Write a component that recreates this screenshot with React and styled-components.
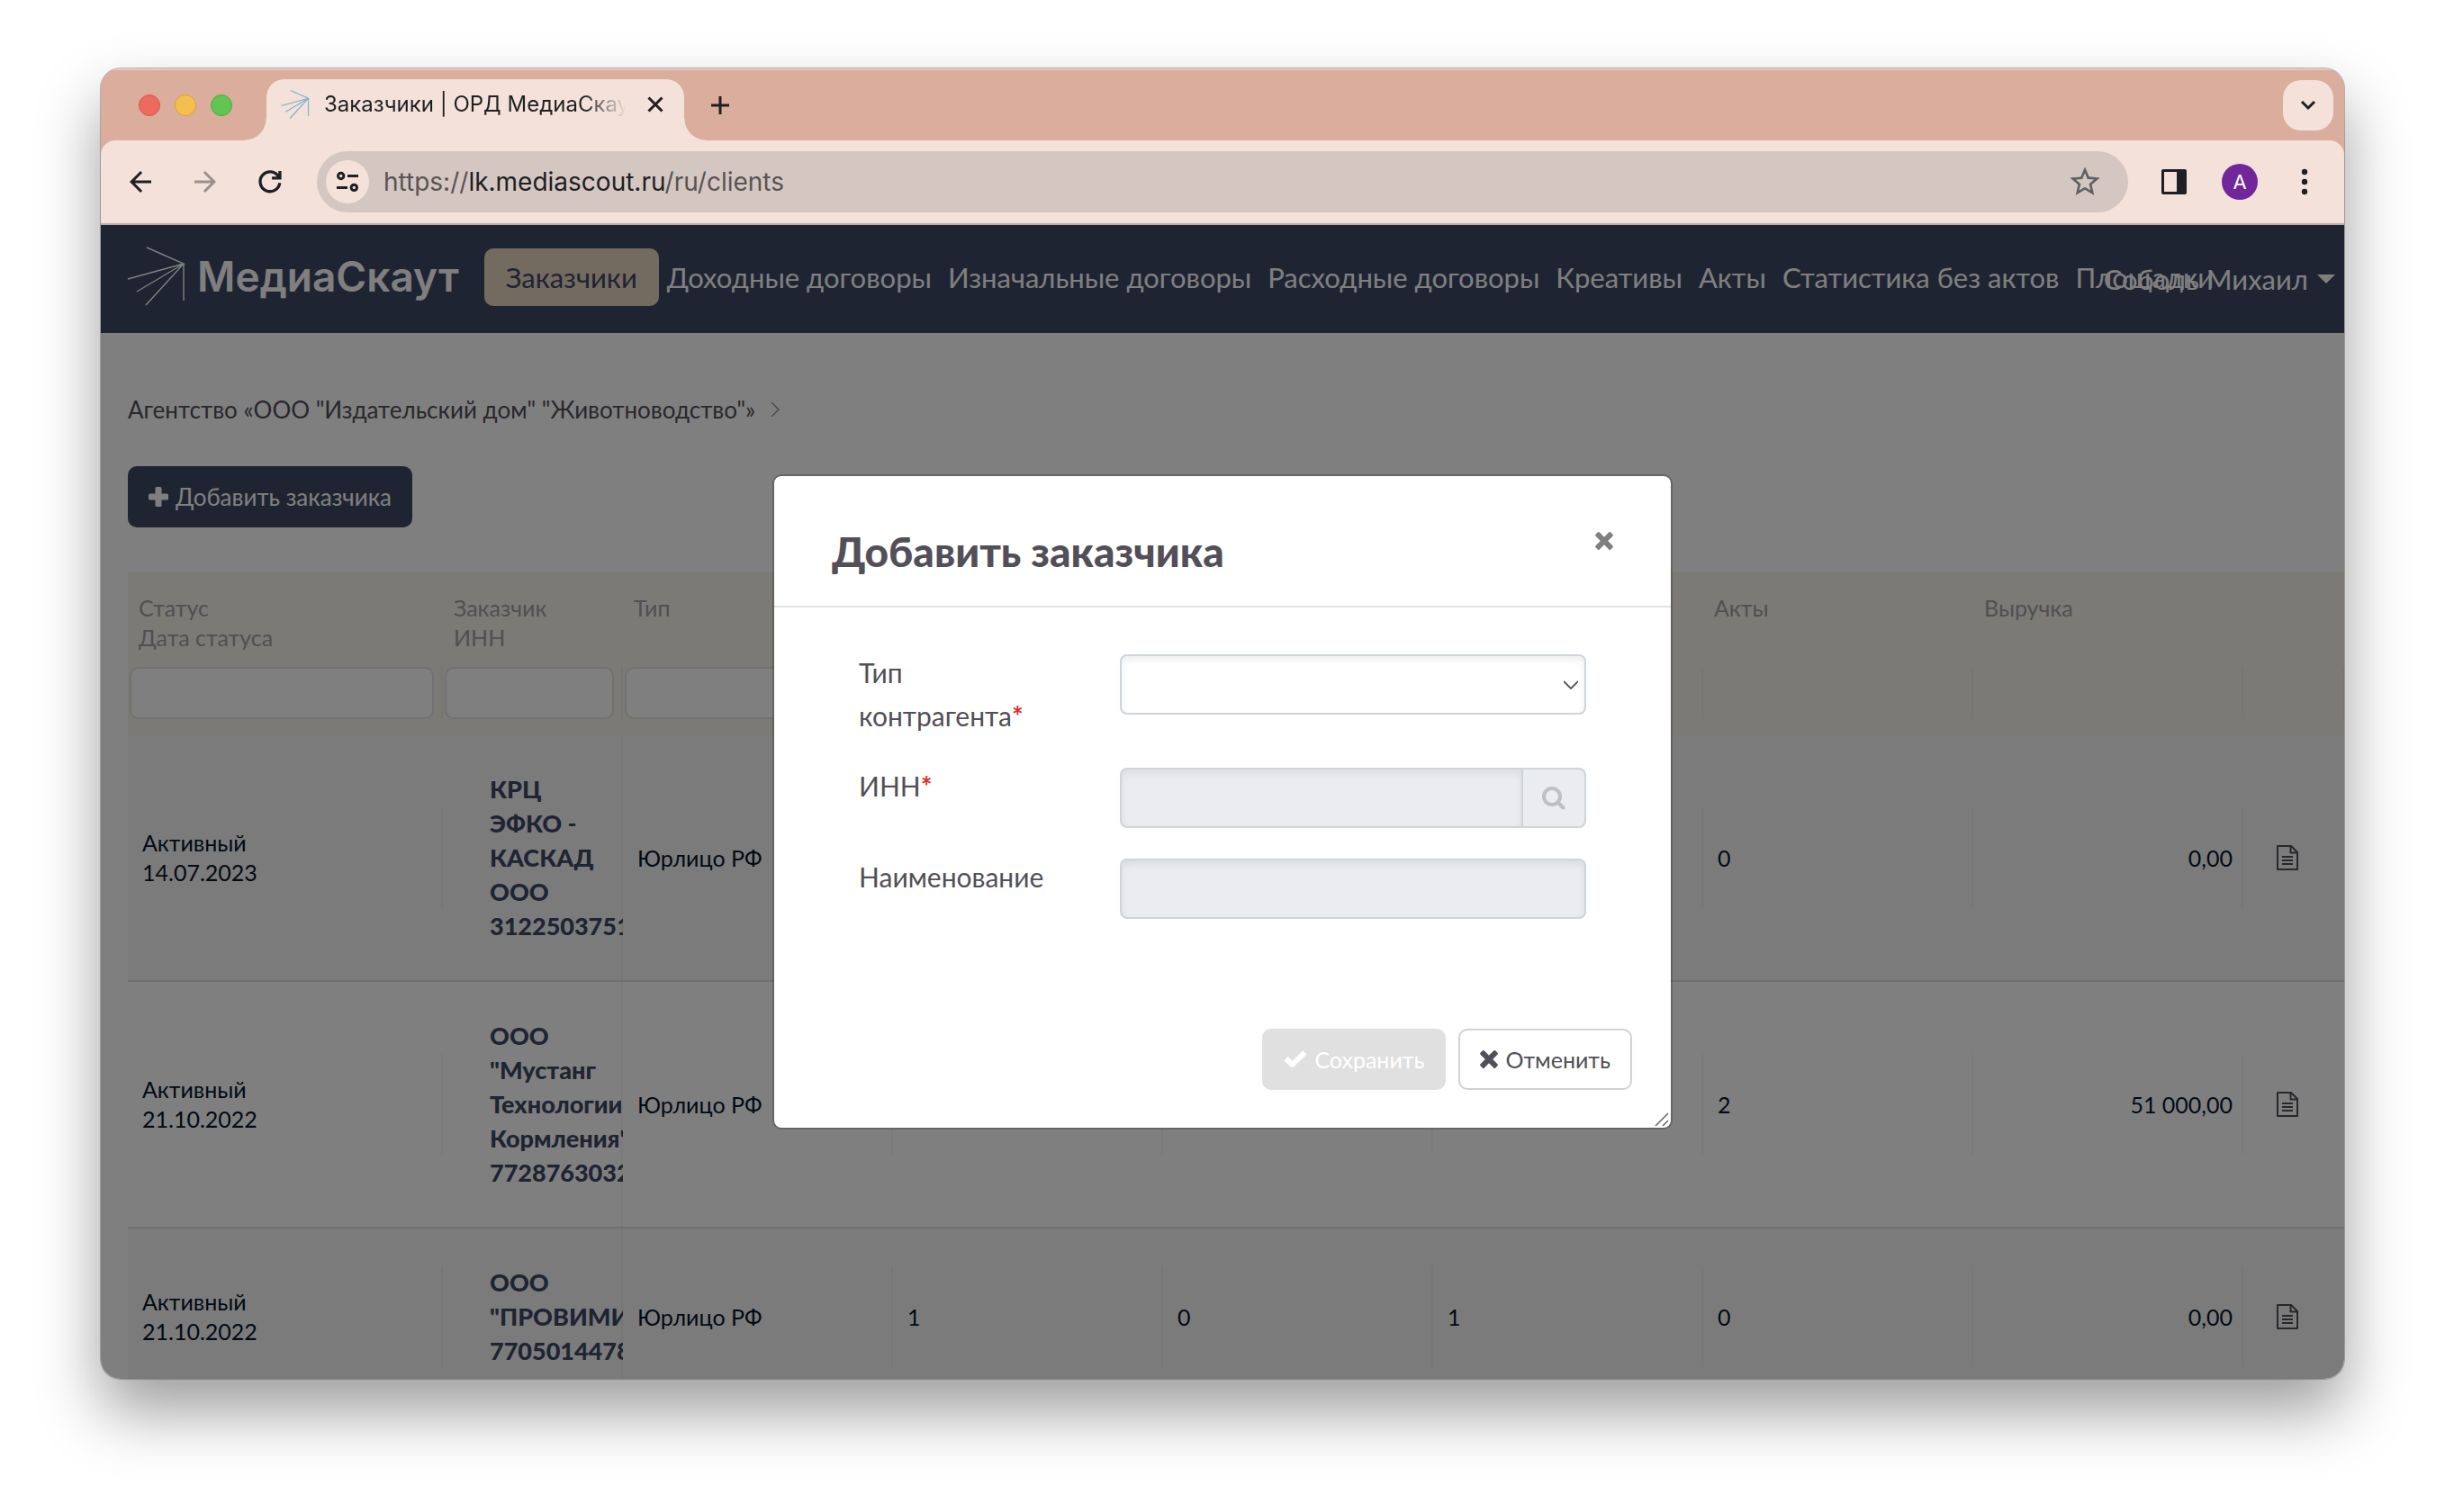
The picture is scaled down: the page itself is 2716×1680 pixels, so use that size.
import React from "react";
import styled, { createGlobalStyle, css } from "styled-components";

const ui = `Inter, "Liberation Sans", sans-serif`;
const text = `Lato, "Noto Sans", sans-serif`;
const navy = "#3e4866";
const ink = "#524f59";

const GlobalStyle = createGlobalStyle`
  *, *::before, *::after { box-sizing: border-box; }
  body { margin: 0; background: #fff; }
  button, input, select { font: inherit; color: inherit; margin: 0; }
  button { border: 0; background: none; padding: 0; cursor: pointer; }
  a { color: inherit; text-decoration: none; }
  svg { display: block; flex: none; }
`;

/* ---------- browser window ---------- */

const Desktop = styled.div`
  height: 100vh;
  padding: 76px 112px 148px;
  display: flex;
`;

const Window = styled.div`
  flex: 1;
  min-width: 0;
  display: flex;
  flex-direction: column;
  overflow: hidden;
  border-radius: 22px;
  background: #dbad9c;
  font-family: ${ui};
  color: #1f2023;
  box-shadow: 0 0 0 1px rgba(0, 0, 0, 0.25), 0 36px 70px rgba(0, 0, 0, 0.39);
`;

const TabStrip = styled.div`
  height: 80px;
  display: flex;
  align-items: center;
  padding: 0 12px 0 42px;
  border-top: 2px solid #e6cabf;
`;

const Lights = styled.div`
  display: flex;
  gap: 16px;
  margin-right: 38px;
`;

const Light = styled.button`
  width: 24px;
  height: 24px;
  border-radius: 50%;
  background: ${(p) => p.$fill};
  border: 1px solid ${(p) => p.$edge};
`;

const Tab = styled.div`
  position: relative;
  align-self: flex-end;
  width: 464px;
  height: 68px;
  padding: 0 22px 12px 16px;
  display: flex;
  align-items: center;
  gap: 16px;
  border-radius: 20px 20px 0 0;
  background: #f3e1da;

  &::before,
  &::after {
    content: "";
    position: absolute;
    bottom: 0;
    width: 24px;
    height: 24px;
  }
  &::before {
    right: 100%;
    background: radial-gradient(circle at 0 0, transparent 23px, #f3e1da 24px);
  }
  &::after {
    left: 100%;
    background: radial-gradient(circle at 100% 0, transparent 23px, #f3e1da 24px);
  }
`;

const TabTitle = styled.span`
  flex: 1;
  min-width: 0;
  overflow: hidden;
  white-space: nowrap;
  font-size: 24px;
  line-height: 32px;
  mask-image: linear-gradient(to right, #000 84%, transparent 98%);
`;

const NewTab = styled.button`
  margin: 0 auto 0 30px;
`;

const TabSearch = styled.button`
  width: 56px;
  height: 56px;
  display: grid;
  place-items: center;
  border-radius: 20px;
  background: #f3e1da;
`;

const Toolbar = styled.div`
  height: 94px;
  display: flex;
  align-items: center;
  padding: 0 26px;
  border-radius: 16px 16px 0 0;
  background: #f3e1da;
  border-bottom: 2px solid #b9b0ae;
`;

const ToolGroup = styled.div`
  display: flex;
  align-items: center;
  gap: ${(p) => p.$gap || 36}px;
`;

const ToolButton = styled.button`
  color: ${(p) => (p.$muted ? "#9b908d" : "#1f2023")};
`;

const KebabBox = styled.span`
  display: block;
  padding: 0 14px 0 10px;
`;

const AddressBar = styled.div`
  flex: 1;
  min-width: 0;
  height: 68px;
  margin: 0 36px 0 34px;
  padding: 0 28px 0 10px;
  display: flex;
  align-items: center;
  gap: 16px;
  border-radius: 34px;
  background: #d4c7c2;
`;

const SiteInfo = styled.button`
  width: 48px;
  height: 48px;
  display: grid;
  place-items: center;
  border-radius: 50%;
  background: #f3e1da;
`;

const Url = styled.span`
  flex: 1;
  font-size: 28px;
  line-height: 36px;
  color: #5a5352;
`;

const Host = styled.span`
  color: #1f2023;
`;

const StarButton = styled.button`
  color: #5f6163;
`;

const Avatar = styled.button`
  width: 40px;
  height: 40px;
  border-radius: 50%;
  background: #71269a;
  color: #fff;
  font-size: 22px;
  line-height: 40px;
`;

/* ---------- web page ---------- */

const Viewport = styled.div`
  position: relative;
  flex: 1;
  min-height: 0;
  overflow: hidden;
  background: #fff;
  font-family: ${text};
`;

const Navbar = styled.header`
  height: 120px;
  display: flex;
  align-items: center;
  padding: 0 10px 0 29px;
  background: ${navy};
  color: #fff;
  white-space: nowrap;
`;

const Brand = styled.a`
  display: flex;
  align-items: center;
  gap: 12px;
  margin: 0 28px 6px 0;
  font: 600 46px/56px ${ui};
`;

const Nav = styled.nav`
  flex: 1;
  min-width: 0;
  display: flex;
  align-items: center;
  margin-bottom: 4px;
  font-size: 31px;
  line-height: 40px;
`;

const NavLink = styled.a`
  padding: 12px 9px;
  ${(p) =>
    p.$active &&
    css`
      padding: 12px 24px;
      border-radius: 10px;
      background: #e6d6be;
      color: ${navy};
    `}
`;

const UserMenu = styled.button`
  display: flex;
  align-items: center;
  gap: 10px;
  color: #fff;
  font-size: 31px;
  line-height: 40px;
`;

const Caret = styled.span`
  border: 10px solid transparent;
  border-top-color: #fff;
  border-bottom: 0;
`;

const Content = styled.main`
  padding: 69px 0 0 30px;
`;

const Breadcrumb = styled.nav`
  display: flex;
  align-items: center;
  gap: 14px;
  font-size: 26px;
  line-height: 32px;
  color: ${ink};
`;

const Button = styled.button`
  height: 68px;
  padding: 0 23px;
  display: inline-flex;
  align-items: center;
  gap: 8px;
  border-radius: 10px;
  font-family: ${text};
  font-size: 25px;
  line-height: 32px;
  white-space: nowrap;
  ${(p) =>
    p.$kind === "primary" &&
    css`
      font-size: 26px;
      background: ${navy};
      color: #fff;
    `}
  ${(p) =>
    p.$kind === "muted" &&
    css`
      padding: 0 24px;
      background: #e0e0e0;
      color: #fff;
    `}
  ${(p) =>
    p.$kind === "outline" &&
    css`
      padding: 0 22px;
      background: #fff;
      color: ${ink};
      border: 2px solid #d2d2d3;
    `}
`;

const AddBar = styled.div`
  padding: 47px 0 49px;
  display: flex;
`;

const Table = styled.table`
  width: 100%;
  table-layout: fixed;
  border-collapse: separate;
  border-spacing: 0;
  font-size: 25px;
  line-height: 33px;
  color: #04152a;
`;

const Col = styled.col`
  width: ${(p) => (p.$width ? `${p.$width}px` : "auto")};
`;

const HeadRow = styled.tr`
  background: #f8f4ea;
`;

const HeadCell = styled.th`
  padding: 24px 12px 16px;
  text-align: left;
  vertical-align: top;
  font-weight: 400;
  color: #a29fa4;
  white-space: pre-line;
`;

const rule = css`
  background-image: linear-gradient(rgba(0, 0, 0, 0.03), rgba(0, 0, 0, 0.03));
  background-position: right center;
  background-repeat: no-repeat;
`;

const FilterCell = styled.td`
  height: 76px;
  padding: 0 10px 0 2px;
  vertical-align: top;
  ${rule}
  background-position: right top;
  background-size: 2px 58px;
`;

const FilterInput = styled.input`
  display: block;
  width: 100%;
  height: 58px;
  padding: 0 12px;
  border: 2px solid #e2e2e4;
  border-radius: 10px;
  background: #fff;
`;

const BodyRow = styled.tr`
  &:nth-child(odd) {
    background: #f6f6f6;
  }
`;

const Cell = styled.td`
  padding: 41px 12px 41px 16px;
  border-bottom: 2px solid #dedede;
  text-align: ${(p) => (p.$end ? "right" : "left")};
  white-space: pre-line;
  ${rule}
  background-size: 2px 112px;
`;

const ClientCell = styled(Cell)`
  padding: 41px 0 41px 52px;
  overflow: hidden;
  white-space: pre;
  font-size: 27px;
  font-weight: 900;
  line-height: 38px;
  color: ${navy};
  background-size: 2px 100%;
`;

const ActionCell = styled(Cell)`
  padding-left: 37px;
  color: ${ink};
  background-image: none;
  & > button {
    display: block;
  }
`;

/* ---------- dialog ---------- */

const Backdrop = styled.div`
  position: absolute;
  inset: 0;
  display: flex;
  align-items: center;
  justify-content: center;
  background: rgba(0, 0, 0, 0.5);
`;

const Dialog = styled.section`
  position: relative;
  width: 1000px;
  max-width: 90%;
  border: 2px solid rgba(0, 0, 0, 0.2);
  border-radius: 10px;
  background: #fff;
  background-clip: padding-box;
  color: ${ink};
`;

const DialogHeader = styled.header`
  display: flex;
  align-items: flex-start;
  justify-content: space-between;
  padding: 56px 64px 32px;
  border-bottom: 2px solid #dee2e6;
`;

const DialogTitle = styled.h2`
  margin: 0;
  font-size: 46px;
  font-weight: 900;
  line-height: 56px;
`;

const CloseButton = styled.button`
  padding-top: 6px;
  color: #7f7f7f;
`;

const Form = styled.form`
  display: grid;
  row-gap: 34px;
  padding: 52px 94px 122px;
  font-size: 30px;
`;

const Field = styled.div`
  display: grid;
  grid-template-columns: 290px 1fr;
  align-items: start;
`;

const Label = styled.label`
  margin-top: -4px;
  padding-right: 72px;
  line-height: 48px;
`;

const Required = styled.span`
  font-weight: 700;
  color: #d9302b;
`;

const control = css`
  width: 100%;
  height: 67px;
  padding: 0 24px;
  border: 2px solid #ced4da;
  border-radius: 8px;
  background: ${(p) => (p.disabled ? "#ebecef" : "#fff")};
  box-shadow: inset 0 4px 8px rgba(0, 0, 0, 0.07);
`;

const TextInput = styled.input`
  ${control}
`;

const SelectBox = styled.div`
  display: grid;
  align-items: center;
  & > * {
    grid-area: 1 / 1;
  }
  & > svg {
    justify-self: end;
    margin-right: 9px;
    pointer-events: none;
  }
`;

const Select = styled.select`
  ${control}
  appearance: none;
`;

const SearchGroup = styled.div`
  display: flex;
  & > input {
    flex: 1;
    min-width: 0;
    border-radius: 8px 0 0 8px;
    border-right: 0;
  }
`;

const SearchButton = styled.button`
  width: 72px;
  height: 67px;
  display: grid;
  place-items: center;
  border: 2px solid #ced4da;
  border-radius: 0 8px 8px 0;
  background: #ebecef;
  color: #bfbfc0;
`;

const DialogFooter = styled.footer`
  display: flex;
  justify-content: flex-end;
  gap: 14px;
  padding: 0 43px 42px;
`;

const ResizeGrip = styled.svg`
  position: absolute;
  right: 2px;
  bottom: 1px;
`;

/* ---------- drawings ---------- */

const Rays = ({ size, color, stroke }) => (
  <svg width={size} height={size} viewBox="0 0 66 66" fill="none" stroke={color} strokeWidth={stroke}>
    <path d="M22 1 63 19 1 36M63 19 11 50M63 19 21 65M63 19V60" />
  </svg>
);

const Material = ({ d, size = 36 }) => (
  <svg width={size} height={size} viewBox="0 0 24 24" fill="currentColor">
    <path d={d} />
  </svg>
);

const Stroke = ({ size, d, width, box = size, color = "currentColor" }) => (
  <svg width={size} height={size} viewBox={`0 0 ${box} ${box}`} fill="none" stroke={color} strokeWidth={width}>
    <path d={d} />
  </svg>
);

const Plus = () => (
  <svg width="22" height="22" viewBox="0 0 22 22" fill="currentColor">
    <rect x="7.5" width="7" height="22" rx="1.5" />
    <rect y="7.5" width="22" height="7" rx="1.5" />
  </svg>
);

const Cross = ({ size = 20 }) => (
  <svg width={size} height={size} viewBox="0 0 20 20" fill="currentColor">
    <g transform="rotate(45 10 10)">
      <rect x="7" y="-1.8" width="6" height="23.6" rx="1.5" />
      <rect x="-1.8" y="7" width="23.6" height="6" rx="1.5" />
    </g>
  </svg>
);

const Check = () => (
  <svg width="26" height="20" viewBox="0 0 26 20" fill="none" stroke="currentColor" strokeWidth="6" strokeLinejoin="round">
    <path d="M2.5 9 9.5 15.8 23.5 2.5" />
  </svg>
);

const Magnifier = () => (
  <svg width="26" height="26" viewBox="0 0 26 26" fill="none" stroke="currentColor" strokeWidth="4">
    <circle cx="11" cy="11" r="9" />
    <path d="m17.5 17.5 6 6" strokeLinecap="round" />
  </svg>
);

const Tune = () => (
  <svg width="24" height="24" viewBox="0 0 24 24" fill="none" stroke="currentColor" strokeWidth="3">
    <circle cx="4.7" cy="5.5" r="3.2" />
    <path d="M12 5.5h12M0 18.4h12" />
    <circle cx="19.3" cy="18.4" r="3.2" />
  </svg>
);

const SidePanel = () => (
  <svg width="30" height="30" viewBox="0 0 30 30" fill="#1f2023">
    <path fillRule="evenodd" d="M3 1h24a2 2 0 0 1 2 2v24a2 2 0 0 1-2 2H3a2 2 0 0 1-2-2V3a2 2 0 0 1 2-2zM4 4v22h14V4z" />
  </svg>
);

const Kebab = () => (
  <svg width="8" height="30" viewBox="0 0 8 30" fill="#1f2023">
    <circle cx="4" cy="4" r="3.2" />
    <circle cx="4" cy="15" r="3.2" />
    <circle cx="4" cy="26" r="3.2" />
  </svg>
);

const Document = () => (
  <svg width="24" height="28" viewBox="0 0 24 28" fill="none" stroke="currentColor" strokeWidth="2" strokeLinejoin="round">
    <path d="M1 1h15l7 7v19H1zM15.500 1v7.500H23M6 13h12M6 17h12M6 21h12" />
  </svg>
);

const BACK = "M20 11H7.83l5.59-5.59L12 4l-8 8 8 8 1.41-1.41L7.83 13H20v-2z";
const FORWARD = "M12 4l-1.410 1.410L16.170 11H4v2h12.170l-5.580 5.590L12 20l8-8z";
const STAR =
  "M22 9.240l-7.190-.62L12 2 9.190 8.630 2 9.240l5.460 4.730L5.820 21 12 17.270 18.180 21l-1.630-7.030L22 9.240zM12 15.400l-3.760 2.270 1-4.280-3.320-2.880 4.380-.38L12 6.100l1.710 4.040 4.380.38-3.320 2.880 1 4.280L12 15.400z";

/* ---------- data ---------- */

const links = [
  "Заказчики",
  "Доходные договоры",
  "Изначальные договоры",
  "Расходные договоры",
  "Креативы",
  "Акты",
  "Статистика без актов",
  "Площадки",
];

const columns = [
  { width: 350, title: "Статус\nДата статуса", filter: true },
  { width: 200, title: "Заказчик\nИНН", filter: true },
  { width: 300, title: "Тип", filter: true },
  { width: 300, title: "" },
  { width: 300, title: "" },
  { width: 300, title: "" },
  { width: 300, title: "Акты" },
  { width: 300, title: "Выручка" },
  { title: "" },
];

const rows = [
  {
    date: "14.07.2023",
    client: "КРЦ\nЭФКО -\nКАСКАД\nООО\n3122503751",
    counts: ["", "", "", "0"],
    revenue: "0,00",
  },
  {
    date: "21.10.2022",
    client: 'ООО\n"Мустанг\nТехнологии\nКормления"\n7728763032',
    counts: ["", "", "", "2"],
    revenue: "51 000,00",
  },
  {
    date: "21.10.2022",
    client: 'ООО\n"ПРОВИМИ"\n7705014478',
    counts: ["1", "0", "1", "0"],
    revenue: "0,00",
  },
];

function BrowserChrome() {
  return (
    <>
      <TabStrip>
        <Lights>
          <Light aria-label="Закрыть окно" $fill="#ed6a5e" $edge="#d5574c" />
          <Light aria-label="Свернуть" $fill="#f4bf4f" $edge="#d9a23c" />
          <Light aria-label="Развернуть" $fill="#61c554" $edge="#4fa73f" />
        </Lights>
        <Tab>
          <Rays size={32} color="#7fb3c8" stroke={2.4} />
          <TabTitle>Заказчики | ОРД МедиаСкаут</TabTitle>
          <button aria-label="Закрыть вкладку">
            <Stroke size={20} d="M2.500 2.500l15 15M17.500 2.500l-15 15" width={3} />
          </button>
        </Tab>
        <NewTab aria-label="Новая вкладка">
          <Stroke size={20} d="M10 0v20M0 10h20" width={3} />
        </NewTab>
        <TabSearch aria-label="Поиск вкладок">
          <Stroke size={18} d="M2 5l7 7 7-7" width={3} />
        </TabSearch>
      </TabStrip>
      <Toolbar>
        <ToolGroup>
          <ToolButton aria-label="Назад">
            <Material d={BACK} />
          </ToolButton>
          <ToolButton aria-label="Вперёд" $muted>
            <Material d={FORWARD} />
          </ToolButton>
          <ToolButton aria-label="Обновить">
            <Stroke size={36} box={24} width={2.2} d="M19.200 12.800A7.300 7.300 0 1 1 18.300 8.200M19.300 4v5.300H13.400" />
          </ToolButton>
        </ToolGroup>
        <AddressBar>
          <SiteInfo aria-label="Сведения о сайте">
            <Tune />
          </SiteInfo>
          <Url>
            https://<Host>lk.mediascout.ru</Host>/ru/clients
          </Url>
          <StarButton aria-label="В закладки">
            <Material d={STAR} size={40} />
          </StarButton>
        </AddressBar>
        <ToolGroup $gap={38}>
          <ToolButton aria-label="Боковая панель">
            <SidePanel />
          </ToolButton>
          <Avatar>A</Avatar>
          <ToolButton aria-label="Меню">
            <KebabBox>
              <Kebab />
            </KebabBox>
          </ToolButton>
        </ToolGroup>
      </Toolbar>
    </>
  );
}

function ClientsTable() {
  return (
    <Table>
      <colgroup>
        {columns.map((c, i) => (
          <Col key={i} $width={c.width} />
        ))}
      </colgroup>
      <thead>
        <HeadRow>
          {columns.map((c, i) => (
            <HeadCell key={i}>{c.title}</HeadCell>
          ))}
        </HeadRow>
        <HeadRow>
          {columns.map((c, i) => (
            <FilterCell key={i}>{c.filter && <FilterInput aria-label={c.title} />}</FilterCell>
          ))}
        </HeadRow>
      </thead>
      <tbody>
        {rows.map((r, i) => (
          <BodyRow key={i}>
            <Cell>{`Активный\n${r.date}`}</Cell>
            <ClientCell>
              <a href="#client">{r.client}</a>
            </ClientCell>
            <Cell>Юрлицо РФ</Cell>
            {r.counts.map((n, j) => (
              <Cell key={j}>{n}</Cell>
            ))}
            <Cell $end>{r.revenue}</Cell>
            <ActionCell>
              <button aria-label="Документ">
                <Document />
              </button>
            </ActionCell>
          </BodyRow>
        ))}
      </tbody>
    </Table>
  );
}

function AddClientDialog() {
  return (
    <Backdrop>
      <Dialog role="dialog" aria-labelledby="dialog-title">
        <DialogHeader>
          <DialogTitle id="dialog-title">Добавить заказчика</DialogTitle>
          <CloseButton aria-label="Закрыть">
            <Cross />
          </CloseButton>
        </DialogHeader>
        <Form id="client-form">
          <Field>
            <Label htmlFor="kind">
              Тип контрагента<Required>*</Required>
            </Label>
            <SelectBox>
              <Select id="kind" />
              <Stroke size={16} d="M0 4l8 8 8-8" width={1.8} />
            </SelectBox>
          </Field>
          <Field>
            <Label htmlFor="inn">
              ИНН<Required>*</Required>
            </Label>
            <SearchGroup>
              <TextInput id="inn" disabled />
              <SearchButton type="button" aria-label="Найти" disabled>
                <Magnifier />
              </SearchButton>
            </SearchGroup>
          </Field>
          <Field>
            <Label htmlFor="name">Наименование</Label>
            <TextInput id="name" disabled />
          </Field>
        </Form>
        <DialogFooter>
          <Button $kind="muted" form="client-form" disabled>
            <Check />
            Сохранить
          </Button>
          <Button $kind="outline" type="button">
            <Cross />
            Отменить
          </Button>
        </DialogFooter>
        <ResizeGrip width="16" height="16" viewBox="0 0 16 16" fill="none" stroke="#6b6b6b" strokeWidth="1.6">
          <path d="M1 15 15 1M9 15l6-6" />
        </ResizeGrip>
      </Dialog>
    </Backdrop>
  );
}

export default function App() {
  return (
    <>
      <GlobalStyle />
      <Desktop>
        <Window>
          <BrowserChrome />
          <Viewport>
            <Navbar>
              <Brand href="#home">
                <Rays size={66} color="#fff" stroke={1.4} />
                МедиаСкаут
              </Brand>
              <Nav>
                {links.map((l, i) => (
                  <NavLink key={l} href="#nav" $active={i === 0}>
                    {l}
                  </NavLink>
                ))}
              </Nav>
              <UserMenu>
                Соболь Михаил
                <Caret />
              </UserMenu>
            </Navbar>
            <Content>
              <Breadcrumb>
                <a href="#agency">Агентство «ООО "Издательский дом" "Животноводство"»</a>
                <Stroke size={16} d="M4 0l8 8-8 8" width={1.4} color="#8c8a90" />
              </Breadcrumb>
              <AddBar>
                <Button $kind="primary">
                  <Plus />
                  Добавить заказчика
                </Button>
              </AddBar>
              <ClientsTable />
            </Content>
            <AddClientDialog />
          </Viewport>
        </Window>
      </Desktop>
    </>
  );
}
